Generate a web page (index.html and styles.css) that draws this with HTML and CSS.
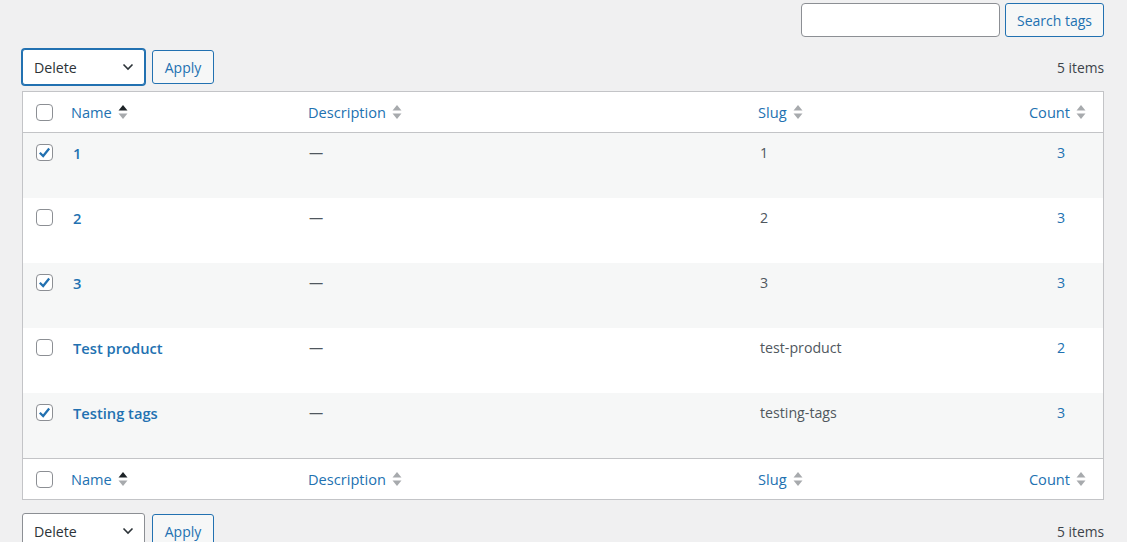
FILE: index.html
```html
<!DOCTYPE html>
<html lang="en">
<head>
<meta charset="utf-8">
<title>Tags</title>
<link rel="stylesheet" href="styles.css">
</head>
<body>
<div class="wrap">
  <div class="search-row">
    <input class="search-input" type="search" aria-label="Search tags">
    <button class="btn">Search tags</button>
  </div>

  <div class="tablenav top">
    <div class="bulk">
      <div class="select focused"><span>Delete</span><svg class="chev" width="12" height="8" viewBox="0 0 12 8"><path d="M1.5 1.5 L6 6 L10.5 1.5" fill="none" stroke="#2c3338" stroke-width="1.6"/></svg></div>
      <button class="btn">Apply</button>
    </div>
    <div class="num-items">5 items</div>
  </div>

  <table class="list">
    <colgroup>
      <col class="c-cb"><col class="c-name"><col class="c-desc"><col class="c-slug"><col class="c-count">
    </colgroup>
    <thead>
      <tr>
        <th class="cb"><span class="box"></span></th>
        <th><a class="sort">Name<svg class="ind" width="10" height="16" viewBox="0 0 10 16"><polygon points="0.5,6.5 5,1 9.5,6.5" fill="#1d2327"/><polygon points="0.5,9.5 9.5,9.5 5,15" fill="#a7aaad"/></svg></a></th>
        <th><a class="sort">Description<svg class="ind" width="10" height="16" viewBox="0 0 10 16"><polygon points="0.5,6.5 5,1 9.5,6.5" fill="#a7aaad"/><polygon points="0.5,9.5 9.5,9.5 5,15" fill="#a7aaad"/></svg></a></th>
        <th><a class="sort">Slug<svg class="ind" width="10" height="16" viewBox="0 0 10 16"><polygon points="0.5,6.5 5,1 9.5,6.5" fill="#a7aaad"/><polygon points="0.5,9.5 9.5,9.5 5,15" fill="#a7aaad"/></svg></a></th>
        <th class="count-h"><a class="sort">Count<svg class="ind" width="10" height="16" viewBox="0 0 10 16"><polygon points="0.5,6.5 5,1 9.5,6.5" fill="#a7aaad"/><polygon points="0.5,9.5 9.5,9.5 5,15" fill="#a7aaad"/></svg></a></th>
      </tr>
    </thead>
    <tbody>
      <tr class="alt">
        <td class="cb"><span class="box checked"><svg width="15" height="15" viewBox="0 0 16 16"><path d="M3 8.2 L6.6 11.8 L13 3.8" fill="none" stroke="#2271b1" stroke-width="2.4"/></svg></span></td>
        <td class="name"><a class="row-title">1</a></td>
        <td class="dash">—</td>
        <td class="slug">1</td>
        <td class="count"><a>3</a></td>
      </tr>
      <tr>
        <td class="cb"><span class="box"></span></td>
        <td class="name"><a class="row-title">2</a></td>
        <td class="dash">—</td>
        <td class="slug">2</td>
        <td class="count"><a>3</a></td>
      </tr>
      <tr class="alt">
        <td class="cb"><span class="box checked"><svg width="15" height="15" viewBox="0 0 16 16"><path d="M3 8.2 L6.6 11.8 L13 3.8" fill="none" stroke="#2271b1" stroke-width="2.4"/></svg></span></td>
        <td class="name"><a class="row-title">3</a></td>
        <td class="dash">—</td>
        <td class="slug">3</td>
        <td class="count"><a>3</a></td>
      </tr>
      <tr>
        <td class="cb"><span class="box"></span></td>
        <td class="name"><a class="row-title">Test product</a></td>
        <td class="dash">—</td>
        <td class="slug">test-product</td>
        <td class="count"><a>2</a></td>
      </tr>
      <tr class="alt">
        <td class="cb"><span class="box checked"><svg width="15" height="15" viewBox="0 0 16 16"><path d="M3 8.2 L6.6 11.8 L13 3.8" fill="none" stroke="#2271b1" stroke-width="2.4"/></svg></span></td>
        <td class="name"><a class="row-title">Testing tags</a></td>
        <td class="dash">—</td>
        <td class="slug">testing-tags</td>
        <td class="count"><a>3</a></td>
      </tr>
    </tbody>
    <tfoot>
      <tr>
        <th class="cb"><span class="box"></span></th>
        <th><a class="sort">Name<svg class="ind" width="10" height="16" viewBox="0 0 10 16"><polygon points="0.5,6.5 5,1 9.5,6.5" fill="#1d2327"/><polygon points="0.5,9.5 9.5,9.5 5,15" fill="#a7aaad"/></svg></a></th>
        <th><a class="sort">Description<svg class="ind" width="10" height="16" viewBox="0 0 10 16"><polygon points="0.5,6.5 5,1 9.5,6.5" fill="#a7aaad"/><polygon points="0.5,9.5 9.5,9.5 5,15" fill="#a7aaad"/></svg></a></th>
        <th><a class="sort">Slug<svg class="ind" width="10" height="16" viewBox="0 0 10 16"><polygon points="0.5,6.5 5,1 9.5,6.5" fill="#a7aaad"/><polygon points="0.5,9.5 9.5,9.5 5,15" fill="#a7aaad"/></svg></a></th>
        <th class="count-h"><a class="sort">Count<svg class="ind" width="10" height="16" viewBox="0 0 10 16"><polygon points="0.5,6.5 5,1 9.5,6.5" fill="#a7aaad"/><polygon points="0.5,9.5 9.5,9.5 5,15" fill="#a7aaad"/></svg></a></th>
      </tr>
    </tfoot>
  </table>

  <div class="tablenav bottom">
    <div class="bulk">
      <div class="select"><span>Delete</span><svg class="chev" width="12" height="8" viewBox="0 0 12 8"><path d="M1.5 1.5 L6 6 L10.5 1.5" fill="none" stroke="#2c3338" stroke-width="1.6"/></svg></div>
      <button class="btn">Apply</button>
    </div>
    <div class="num-items">5 items</div>
  </div>
</div>
</body>
</html>
```

FILE: styles.css
```css
* { box-sizing: border-box; }

html, body {
  margin: 0;
  background: #f0f0f1;
}

body {
  font-family: "Open Sans", "Noto Sans", sans-serif;
  font-size: 13px;
  color: #50575e;
}

.wrap {
  padding: 3px 23px 0 22px;
}

.search-row {
  display: flex;
  justify-content: flex-end;
  gap: 5px;
  height: 34px;
}

.search-input {
  width: 199px;
  height: 34px;
  border: 1px solid #8c8f94;
  border-radius: 4px;
  background: #fff;
  margin: 0;
  padding: 0 8px;
  font: inherit;
}

.btn {
  height: 34px;
  margin: 0;
  padding: 0 11px;
  border: 1px solid #2271b1;
  border-radius: 3px;
  background: #f6f7f7;
  color: #2271b1;
  font: inherit;
  font-size: 14px;
}

.search-row .btn {
  width: 99px;
  padding: 0;
}

.tablenav {
  display: flex;
  justify-content: space-between;
  align-items: center;
  height: 36px;
}

.tablenav.top {
  margin-top: 12px;
  margin-bottom: 6px;
}

.tablenav.bottom {
  margin-top: 13px;
}

.bulk {
  display: flex;
  align-items: center;
  gap: 7px;
}

.bulk .btn {
  width: 62px;
  padding: 0;
}

.select {
  width: 123px;
  height: 36px;
  display: flex;
  align-items: center;
  justify-content: space-between;
  padding: 0 10px 0 11px;
  background: #fff;
  border: 1px solid #8c8f94;
  border-radius: 3px;
  color: #2c3338;
  font-size: 14.2px;
}

.select.focused {
  border-color: #2271b1;
  box-shadow: 0 0 0 1px #2271b1;
}

.num-items {
  color: #3c434a;
  font-size: 13.8px;
}

.list {
  width: 100%;
  border: 1px solid #c3c4c7;
  border-spacing: 0;
  table-layout: fixed;
  background: #fff;
}

.c-cb { width: 38px; }
.c-name { width: 237px; }
.c-desc { width: 450px; }
.c-slug { width: auto; }
.c-count { width: 120px; }

th, td {
  text-align: left;
  font-weight: normal;
  padding: 0 10px;
}

thead th, tfoot th {
  height: 41px;
  vertical-align: middle;
}

thead th { border-bottom: 1px solid #c3c4c7; }
tfoot th { border-top: 1px solid #c3c4c7; }

.sort {
  display: inline-flex;
  align-items: center;
  gap: 6px;
  color: #2271b1;
  font-size: 14.6px;
}

.ind { display: block; }

tbody td {
  height: 65px;
  vertical-align: top;
  padding-top: 9px;
  line-height: 22px;
  font-size: 14.2px;
}

tbody tr.alt td { background: #f6f7f7; }

th.cb, td.cb {
  padding: 0 0 0 13px;
}

td.cb { padding-top: 11px; }

.box {
  display: flex;
  align-items: center;
  justify-content: center;
  width: 17px;
  height: 17px;
  border: 1px solid #8c8f94;
  border-radius: 4px;
  background: #fff;
}

td.name { padding-left: 12px; }

.row-title {
  color: #2271b1;
  font-weight: 600;
  font-size: 14.7px;
}

.dash { color: #50575e; padding-left: 11px; }

td.slug { color: #50575e; padding-left: 12px; }

td.count {
  text-align: right;
  padding-right: 38px;
}

td.count a { color: #2271b1; }

th.count-h {
  text-align: right;
  padding-right: 17px;
}
```
